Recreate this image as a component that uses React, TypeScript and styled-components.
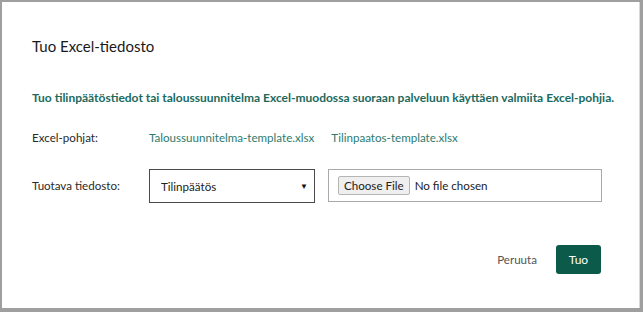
import React from "react";
import styled, { createGlobalStyle } from "styled-components";

const GlobalStyle = createGlobalStyle`
  html, body {
    margin: 0;
    padding: 0;
    background: #9f9f9f;
  }
  body {
    font-family: Lato, "Noto Sans", sans-serif;
  }
`;

const Frame = styled.div`
  width: 643px;
  height: 312px;
  box-sizing: border-box;
  padding: 2px 3px 4px 2px;
`;

const Modal = styled.div`
  height: 100%;
  box-sizing: border-box;
  background: #fff;
  border-right: 1px solid #d8d8d8;
  padding: 34px 38px 0 30px;
  display: flex;
  flex-direction: column;
`;

const Title = styled.h2`
  margin: 0;
  font-size: 15px;
  line-height: 20px;
  font-weight: 400;
  color: #1a1a1a;
`;

const Lead = styled.p`
  margin: 33px 0 0;
  font-size: 12px;
  line-height: 18px;
  font-weight: 700;
  color: #1b6a5e;
  white-space: nowrap;
`;

const Row = styled.div<{ $gap: number }>`
  margin-top: ${(p) => p.$gap}px;
  display: grid;
  grid-template-columns: 117px auto;
  align-items: center;
`;

const Label = styled.span`
  font-size: 11.6px;
  line-height: 18px;
  color: #2a2a2a;
`;

const Links = styled.div`
  display: flex;
  gap: 17px;
`;

const Link = styled.a`
  font-size: 11.6px;
  line-height: 18px;
  color: #2e7b6e;
  text-decoration: none;
  cursor: pointer;
`;

const Inputs = styled.div`
  display: flex;
  gap: 13px;
`;

const SelectWrap = styled.div`
  position: relative;
  width: 166px;
  height: 34px;

  &::after {
    content: "▼";
    position: absolute;
    right: 7px;
    top: 12px;
    font-size: 8px;
    line-height: 10px;
    color: #111;
    pointer-events: none;
  }
`;

const Select = styled.select`
  appearance: none;
  width: 100%;
  height: 100%;
  box-sizing: border-box;
  border: 1px solid #4a4a4a;
  border-radius: 0;
  background: #fff;
  padding: 0 24px 0 11px;
  font-family: Lato, "Noto Sans", sans-serif;
  font-size: 11.6px;
  color: #222;
  outline: none;
`;

const FileBox = styled.div`
  width: 274px;
  height: 33px;
  box-sizing: border-box;
  border: 1px solid #a9a9a9;
  display: flex;
  align-items: center;
  padding-left: 9px;
`;

const FileInput = styled.input`
  font-family: Lato, "Noto Sans", sans-serif;
  font-size: 11.6px;
  color: #222;

  &::file-selector-button {
    font-family: Lato, "Noto Sans", sans-serif;
    font-size: 11.6px;
    color: #222;
    height: 19px;
    padding: 0 5px;
    margin-right: 5px;
    background: #efefef;
    border: 1px solid #b5b5b5;
    border-radius: 2px;
  }
`;

const Footer = styled.div`
  margin-top: 42px;
  display: flex;
  justify-content: flex-end;
  align-items: center;
  gap: 19px;
`;

const CancelButton = styled.button`
  border: none;
  background: none;
  padding: 0;
  font-family: Lato, "Noto Sans", sans-serif;
  font-size: 11.6px;
  color: #555;
  cursor: pointer;
`;

const PrimaryButton = styled.button`
  height: 29px;
  width: 45px;
  padding: 0;
  border: none;
  border-radius: 3px;
  background: #0c5a4a;
  color: #fff;
  font-family: Lato, "Noto Sans", sans-serif;
  font-size: 12px;
  cursor: pointer;
`;

export default function App() {
  return (
    <>
      <GlobalStyle />
      <Frame>
        <Modal>
          <Title>Tuo Excel-tiedosto</Title>
          <Lead>
            Tuo tilinpäätöstiedot tai taloussuunnitelma Excel-muodossa suoraan palveluun käyttäen valmiita Excel-pohjia.
          </Lead>
          <Row $gap={22}>
            <Label>Excel-pohjat:</Label>
            <Links>
              <Link>Taloussuunnitelma-template.xlsx</Link>
              <Link>Tilinpaatos-template.xlsx</Link>
            </Links>
          </Row>
          <Row $gap={22}>
            <Label>Tuotava tiedosto:</Label>
            <Inputs>
              <SelectWrap>
                <Select defaultValue="tilinpaatos">
                  <option value="tilinpaatos">Tilinpäätös</option>
                  <option value="taloussuunnitelma">Taloussuunnitelma</option>
                </Select>
              </SelectWrap>
              <FileBox>
                <FileInput type="file" />
              </FileBox>
            </Inputs>
          </Row>
          <Footer>
            <CancelButton>Peruuta</CancelButton>
            <PrimaryButton>Tuo</PrimaryButton>
          </Footer>
        </Modal>
      </Frame>
    </>
  );
}
